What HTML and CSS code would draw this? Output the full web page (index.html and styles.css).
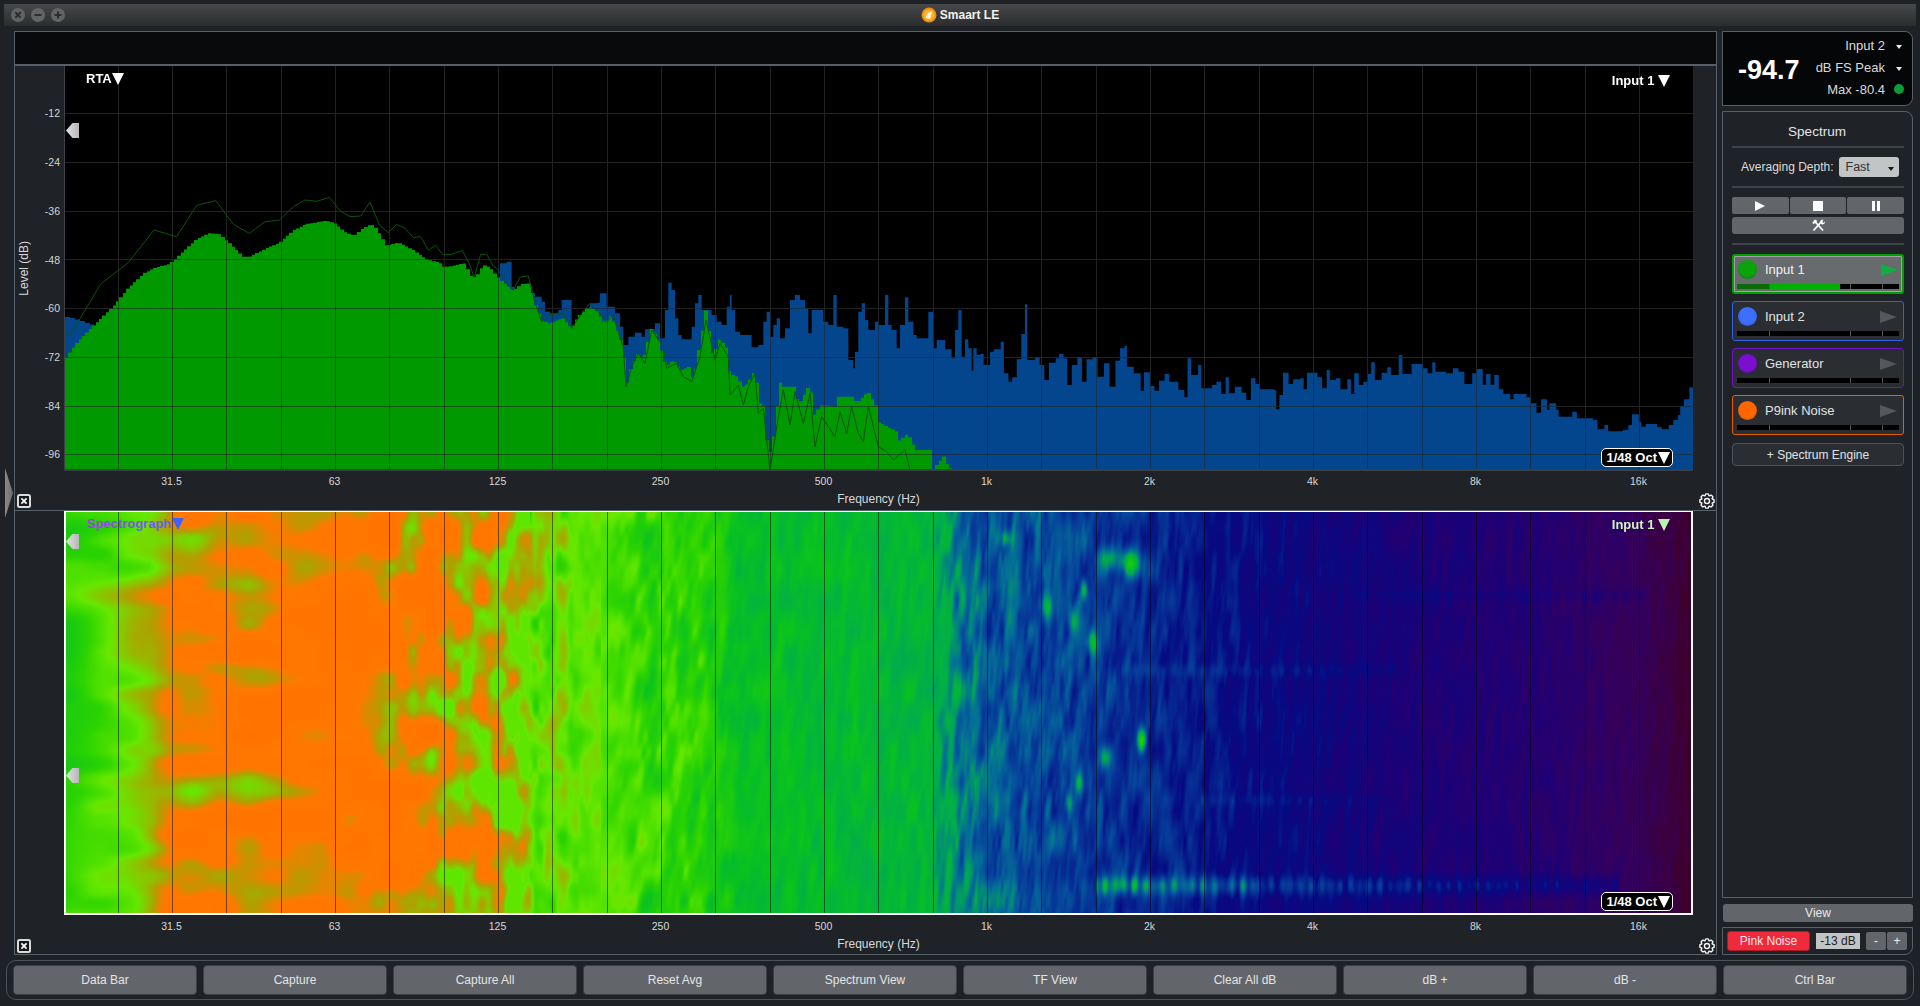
FILE: index.html
```html
<!DOCTYPE html>
<html lang="en">
<head>
<meta charset="utf-8">
<title>Smaart LE</title>
<link rel="stylesheet" href="styles.css">
</head>
<body>
<div class="app">
  <header class="titlebar">
    <div class="lights">
      <svg class="light" viewBox="0 0 14 14"><circle cx="7" cy="7" r="7" fill="#626466"/><path d="M4.3 4.3l5.4 5.4M9.7 4.3L4.3 9.7" stroke="#2c2e30" stroke-width="2"/></svg>
      <svg class="light" viewBox="0 0 14 14"><circle cx="7" cy="7" r="7" fill="#626466"/><path d="M3.5 7h7" stroke="#2c2e30" stroke-width="2"/></svg>
      <svg class="light" viewBox="0 0 14 14"><circle cx="7" cy="7" r="7" fill="#626466"/><path d="M3.5 7h7M7 3.5v7" stroke="#2c2e30" stroke-width="2"/></svg>
    </div>
    <div class="apptitle">
      <svg class="appicon" viewBox="0 0 16 16"><circle cx="8" cy="8" r="7.5" fill="#ef8f14"/><circle cx="8" cy="8" r="5.6" fill="#f7b22e"/><path d="M4.5 10.5C6 6 9 4.5 11.5 4.5C10 7 10.5 9 9 11.5C7.8 12.2 6 11.8 4.5 10.5z" fill="#fff3cf"/></svg>
      <span>Smaart LE</span>
    </div>
    <div></div>
  </header>

  <div class="main">
    <section class="scopes">
      <div class="strip"></div>

      <div class="scope">
        <div class="yaxis">
          <div class="ytitle"><span>Level (dB)</span></div>
          <div class="ylabels">
            <span>-12</span><span>-24</span><span>-36</span><span>-48</span><span>-60</span><span>-72</span><span>-84</span><span>-96</span>
          </div>
        </div>
        <div class="plot plot-rta">
          <canvas id="rta" class="plotcanvas" width="1628" height="403"></canvas>
          <div class="tag tag-left tag-white">RTA<i class="tri tri-white"></i></div>
          <div class="tag tag-right tag-white">Input 1 <i class="tri tri-white"></i></div>
          <div class="handle handle-a"></div>
          <div class="badge">1/48 Oct<i class="tri tri-white"></i></div>
        </div>
        <div></div>
        <div></div>
        <div class="ticks"><span>31.5</span><span>63</span><span>125</span><span>250</span><span>500</span><span>1k</span><span>2k</span><span>4k</span><span>8k</span><span>16k</span></div>
        <div></div>
        <div class="foot-left"><svg class="closebox" viewBox="0 0 14 14"><rect x="1" y="1" width="12" height="12" rx="1.5" fill="#15181a" stroke="#dadada" stroke-width="2"/><path d="M4.4 4.4l5.2 5.2M9.6 4.4L4.4 9.6" stroke="#fff" stroke-width="1.8"/></svg></div>
        <div class="foot-title">Frequency (Hz)</div>
        <div class="foot-right"><svg class="gear" viewBox="-8 -8 16 16"><polygon points="-2.1,-5.1 -1.25,-7.1 1.25,-7.1 2.1,-5.1 4.14,-5.9 5.9,-4.14 5.09,-2.12 7.1,-1.25 7.1,1.25 5.1,2.1 5.9,4.14 4.14,5.9 2.1,5.1 1.25,7.1 -1.25,7.1 -2.1,5.1 -4.14,5.9 -5.9,4.14 -5.1,2.1 -7.1,1.25 -7.1,-1.25 -5.1,-2.1 -5.9,-4.14 -4.14,-5.9" fill="none" stroke="#f4f4f4" stroke-width="1.4" stroke-linejoin="round"/><circle r="2.5" fill="none" stroke="#f4f4f4" stroke-width="1.4"/></svg></div>
      </div>

      <div class="divider"></div>

      <div class="scope scope-low">
        <div class="yaxis"></div>
        <div class="plot plot-spec">
          <canvas id="spec" class="plotcanvas" width="1625" height="401"></canvas>
          <div class="tag tag-left tag-spec"><span class="spectext">Spectrograph</span><i class="tri tri-blue"></i></div>
          <div class="tag tag-right tag-green">Input 1 <i class="tri tri-green"></i></div>
          <div class="handle handle-b"></div>
          <div class="handle handle-c"></div>
          <div class="badge badge-low">1/48 Oct<i class="tri tri-white"></i></div>
        </div>
        <div></div>
        <div></div>
        <div class="ticks ticks-low"><span>31.5</span><span>63</span><span>125</span><span>250</span><span>500</span><span>1k</span><span>2k</span><span>4k</span><span>8k</span><span>16k</span></div>
        <div></div>
        <div class="foot-left"><svg class="closebox" viewBox="0 0 14 14"><rect x="1" y="1" width="12" height="12" rx="1.5" fill="#15181a" stroke="#dadada" stroke-width="2"/><path d="M4.4 4.4l5.2 5.2M9.6 4.4L4.4 9.6" stroke="#fff" stroke-width="1.8"/></svg></div>
        <div class="foot-title">Frequency (Hz)</div>
        <div class="foot-right"><svg class="gear" viewBox="-8 -8 16 16"><polygon points="-2.1,-5.1 -1.25,-7.1 1.25,-7.1 2.1,-5.1 4.14,-5.9 5.9,-4.14 5.09,-2.12 7.1,-1.25 7.1,1.25 5.1,2.1 5.9,4.14 4.14,5.9 2.1,5.1 1.25,7.1 -1.25,7.1 -2.1,5.1 -4.14,5.9 -5.9,4.14 -5.1,2.1 -7.1,1.25 -7.1,-1.25 -5.1,-2.1 -5.9,-4.14 -4.14,-5.9" fill="none" stroke="#f4f4f4" stroke-width="1.4" stroke-linejoin="round"/><circle r="2.5" fill="none" stroke="#f4f4f4" stroke-width="1.4"/></svg></div>
      </div>
    </section>

    <aside class="side">
      <div class="meter">
        <div class="reading">-94.7</div>
        <div class="meterinfo">
          <span>Input 2</span><i class="caret"></i>
          <span>dB FS Peak</span><i class="caret"></i>
          <span>Max -80.4</span><i class="led"></i>
        </div>
      </div>

      <div class="engine">
        <div class="enginetitle">Spectrum</div>
        <div class="rule"></div>
        <div class="avgrow">
          <span>Averaging Depth:</span>
          <div class="select"><span>Fast</span><i class="caret caret-dark"></i></div>
        </div>
        <div class="rule"></div>
        <div class="transport">
          <div class="tbtn"><svg class="ticon" viewBox="0 0 10 10"><path d="M0 0l10 5L0 10z" fill="#fff"/></svg></div>
          <div class="tbtn"><svg class="ticon" viewBox="0 0 10 10"><rect width="10" height="10" fill="#fff"/></svg></div>
          <div class="tbtn"><svg class="ticon" viewBox="0 0 10 10"><path d="M1 0h3v10H1zM6 0h3v10H6z" fill="#fff"/></svg></div>
        </div>
        <div class="tools">
          <svg class="toolicon" viewBox="0 0 14 13"><path d="M3 1.5l9 10" stroke="#fff" stroke-width="1.8" fill="none"/><path d="M1.2 3.5L4.8 0.6l1.4 1.6L2.6 5.2z" fill="#fff"/><path d="M11.5 1.5L2.5 11.5" stroke="#fff" stroke-width="1.8" fill="none"/><path d="M9.4 4.4C8.6 2.4 10 .4 12.4.6L10.9 2.2l.6 1.4 1.5.2 1-1.6C14.4 5 12 6 10.6 5.3z" fill="#fff"/></svg>
        </div>
        <div class="rule rule-tools"></div>

        <div class="channel channel-green">
          <div class="chanrow">
            <i class="dot dot-green"></i><span class="channame">Input 1</span>
            <i class="play play-on"></i>
          </div>
          <div class="chanmeter"><b class="seg seg-a seg-dim"></b><b class="seg seg-b"><u class="segfill"></u></b><b class="seg seg-c"></b><b class="seg seg-d"></b></div>
        </div>
        <div class="channel channel-blue">
          <div class="chanrow">
            <i class="dot dot-blue"></i><span class="channame">Input 2</span>
            <i class="play"></i>
          </div>
          <div class="chanmeter"><b class="seg seg-a"></b><b class="seg seg-b"></b><b class="seg seg-c"></b><b class="seg seg-d"></b></div>
        </div>
        <div class="channel channel-purple">
          <div class="chanrow">
            <i class="dot dot-purple"></i><span class="channame">Generator</span>
            <i class="play"></i>
          </div>
          <div class="chanmeter"><b class="seg seg-a"></b><b class="seg seg-b"></b><b class="seg seg-c"></b><b class="seg seg-d"></b></div>
        </div>
        <div class="channel channel-orange">
          <div class="chanrow">
            <i class="dot dot-orange"></i><span class="channame">P9ink Noise</span>
            <i class="play"></i>
          </div>
          <div class="chanmeter"><b class="seg seg-a"></b><b class="seg seg-b"></b><b class="seg seg-c"></b><b class="seg seg-d"></b></div>
        </div>
        <div class="addengine">+ Spectrum Engine</div>
      </div>

      <div class="viewbtn">View</div>

      <div class="noise">
        <div class="pink">Pink Noise</div>
        <div class="dbbox">-13 dB</div>
        <div class="stepper"><span>-</span><span>+</span></div>
      </div>
    </aside>
  </div>

  <footer class="bottombar">
    <div class="cmd">Data Bar</div>
    <div class="cmd">Capture</div>
    <div class="cmd">Capture All</div>
    <div class="cmd">Reset Avg</div>
    <div class="cmd">Spectrum View</div>
    <div class="cmd">TF View</div>
    <div class="cmd">Clear All dB</div>
    <div class="cmd">dB +</div>
    <div class="cmd">dB -</div>
    <div class="cmd">Ctrl Bar</div>
  </footer>

  <div class="gripper"></div>
</div>
<script src="spectrum.js"></script>
</body>
</html>
```
FILE: styles.css
```css
* { box-sizing: border-box; }

html, body {
  margin: 0;
  height: 1006px;
  overflow: hidden;
  background: #14171a;
}

body {
  font-family: "Liberation Sans", Arial, sans-serif;
  font-size: 12px;
  color: #dcdcdc;
}

i, b, u { display: block; font-style: normal; text-decoration: none; }

.app {
  position: relative;
  height: 1006px;
  padding: 4px;
  display: flex;
  flex-direction: column;
  background: #1e2226;
}

/* title bar */
.titlebar {
  height: 22px;
  flex: none;
  display: grid;
  grid-template-columns: 1fr auto 1fr;
  align-items: center;
  background: linear-gradient(#464849, #2a2c2e);
}
.lights { display: flex; gap: 6px; padding-left: 7px; }
.light { width: 14px; height: 14px; display: block; }
.apptitle {
  display: flex;
  align-items: center;
  gap: 3px;
  font-weight: 700;
  font-size: 12px;
  color: #f2f2f2;
}
.appicon { width: 16px; height: 16px; display: block; }

/* main columns */
.main {
  flex: none;
  height: 923px;
  margin: 5px 3px 0 10px;
  display: grid;
  grid-template-columns: 1703px 191px;
  column-gap: 5px;
}

.scopes {
  border: 1px solid #566069;
  display: flex;
  flex-direction: column;
  background: #1f2327;
}
.strip {
  height: 34px;
  flex: none;
  background: #090a0b;
  border-bottom: 2px solid #566069;
}
.divider { height: 1px; flex: none; background: #566069; }

.scope {
  display: grid;
  grid-template-columns: 49px 1629px 1fr;
  grid-template-rows: 405px 20px 19px;
  flex: none;
}
.scope-low { grid-template-rows: 404px 21px 18px; }

.yaxis { display: flex; color: #d4d4d4; }
.ytitle {
  width: 18px;
  display: flex;
  align-items: center;
  justify-content: center;
}
.ytitle span {
  writing-mode: vertical-rl;
  transform: rotate(180deg);
  font-size: 12px;
  color: #d8d8d8;
}
.ylabels {
  flex: 1;
  display: flex;
  flex-direction: column;
  align-items: flex-end;
  padding: 23px 4px 0 0;
  font-size: 10.5px;
}
.ylabels span {
  flex: none;
  height: 48.72px;
  display: flex;
  align-items: center;
}

.plot { position: relative; background: #000; }
.plot-rta { border-left: 1px solid #3a4046; border-right: 1px solid #3a4046; border-bottom: 2px solid #3a4046; }
.plot-spec { border: 2px solid #fff; border-top-width: 1px; }
.plotcanvas { display: block; }

.ticks {
  display: grid;
  grid-template-columns: repeat(10, 163px);
  padding-left: 26px;
  align-items: center;
  font-size: 10.5px;
  color: #d8d8d8;
  text-align: center;
}
.foot-left { padding: 3px 0 0 2px; }
.foot-right { padding: 2px 0 0 6px; }
.foot-title { padding-top: 1px; text-align: center; line-height: 15px; font-size: 12px; color: #d8d8d8; }
.closebox { width: 14px; height: 14px; display: block; }
.gear { width: 16px; height: 16px; display: block; }

/* plot overlays */
.tag {
  position: absolute;
  display: flex;
  align-items: center;
  line-height: 15px;
  font-weight: 700;
  font-size: 13px;
}
.tag-left { left: 21px; top: 5px; }
.tag-right { right: 22px; top: 7px; white-space: pre; }
.plot-spec .tag-left { top: 4px; }
.plot-spec .tag-right { top: 5px; right: 21px; }
.tag-white { color: #fff; }
.tag-green { color: #c8f7b8; }
.spectext {
  background: linear-gradient(90deg, #b030ff, #5064ff);
  -webkit-background-clip: text;
  background-clip: text;
  color: transparent;
}
.tri {
  width: 0;
  height: 0;
  border-left: 6px solid transparent;
  border-right: 6px solid transparent;
  border-top: 12px solid #fff;
}
.tri-white { border-top-color: #fff; }
.tri-blue { border-top-color: #3f60ff; }
.tri-green { border-top-color: #b8f5b0; }

.handle {
  position: absolute;
  left: 1px;
  width: 13px;
  height: 15px;
  background: linear-gradient(90deg, #e2e2e2, #b6b6b6);
  clip-path: polygon(0 50%, 50% 0, 100% 0, 100% 100%, 50% 100%);
}
.handle-a { top: 57px; }
.handle-b { top: 22px; left: 0; }
.handle-c { top: 256px; left: 0; }

.badge {
  position: absolute;
  right: 19px;
  bottom: 2px;
  height: 19px;
  padding: 0 2px 0 4px;
  display: flex;
  align-items: center;
  gap: 1px;
  background: #000;
  border: 1.5px solid #fff;
  border-radius: 5px;
  font-weight: 700;
  font-size: 13px;
  color: #fff;
}
.badge-low { right: 18px; bottom: 2px; }

/* side column */
.side { display: flex; flex-direction: column; }

.meter {
  height: 75px;
  flex: none;
  display: flex;
  align-items: center;
  justify-content: space-between;
  padding: 0 8px 0 15px;
  background: #050607;
  border: 1px solid #566069;
  border-radius: 0 8px 8px 0;
}
.reading { font-weight: 700; font-size: 27px; color: #fff; padding-top: 3px; }
.meterinfo {
  display: grid;
  grid-template-columns: auto 10px;
  column-gap: 9px;
  row-gap: 7px;
  align-items: center;
  justify-items: end;
  margin-top: -3px;
  font-size: 13px;
  line-height: 15px;
  color: #dadada;
}
.caret {
  width: 0;
  height: 0;
  border-left: 3px solid transparent;
  border-right: 3px solid transparent;
  border-top: 4px solid #e8e8e8;
  margin: 3px 2px 0 0;
}
.caret-dark { border-top-color: #1a1a1a; margin: 4px 0 0 0; }
.led { width: 10px; height: 10px; border-radius: 50%; background: #0b9c3a; }

.engine {
  flex: 1;
  min-height: 0;
  margin-top: 5px;
  padding: 8px 8px 0 9px;
  background: #1f2327;
  border: 1px solid #566069;
  border-radius: 0 8px 0 0;
}
.enginetitle { height: 26px; padding-right: 2px; font-size: 13.5px; line-height: 23px; text-align: center; color: #e4e4e4; }
.rule { height: 2px; background: #3d444a; }
.rule-tools { margin-top: 9px; }
.avgrow {
  height: 38px;
  display: flex;
  align-items: center;
  gap: 5px;
  padding-left: 9px;
  font-size: 12px;
  color: #dcdcdc;
}
.select {
  width: 60px;
  height: 20px;
  padding: 0 5px 0 7px;
  display: flex;
  align-items: center;
  justify-content: space-between;
  background: #c1c5c5;
  border-radius: 3px;
  font-size: 12.5px;
  color: #333;
}
.transport {
  display: grid;
  grid-template-columns: repeat(3, 1fr);
  gap: 1px;
  margin-top: 9px;
}
.tbtn {
  height: 17px;
  display: flex;
  align-items: center;
  justify-content: center;
  background: #62666b;
  border-radius: 2px;
}
.ticon { width: 10px; height: 10px; display: block; }
.tools {
  height: 17px;
  margin-top: 3px;
  display: flex;
  align-items: center;
  justify-content: center;
  background: #62666b;
  border-radius: 3px;
}
.toolicon { width: 14px; height: 13px; display: block; }

.channel {
  height: 40px;
  margin-top: 7px;
  padding: 3px 4px 0;
  background: #2a2e33;
  border: 1px solid;
  border-radius: 3px;
}
.rule-tools + .channel { margin-top: 9px; }
.channel-green {
  padding: 2px 3px 0;
  border: 2px solid #00a000;
  background: #676b6e;
  box-shadow: inset 0 0 0 1px #a0a4a4;
}
.channel-blue { border-color: #2d60e6; }
.channel-purple { border-color: #6d12c4; }
.channel-orange { border-color: #e65f00; }
.chanrow {
  height: 23px;
  display: flex;
  align-items: center;
  gap: 8px;
  padding-left: 1px;
}
.dot { width: 19px; height: 19px; flex: none; border-radius: 50%; }
.dot-green { background: radial-gradient(circle at 50% 45%, #0ca20c 55%, #055a05 100%); }
.dot-blue { background: radial-gradient(circle at 50% 45%, #3c6eff 55%, #26449e 100%); }
.dot-purple { background: radial-gradient(circle at 50% 45%, #7a0fd2 55%, #450a7c 100%); }
.dot-orange { background: radial-gradient(circle at 50% 45%, #ff6600 55%, #a94608 100%); }
.channame { flex: 1; font-size: 13px; color: #e2e2e2; }
.channel-green .channame { color: #f0f0f0; }
.play {
  width: 0;
  height: 0;
  margin-right: 2px;
  border-top: 6px solid transparent;
  border-bottom: 6px solid transparent;
  border-left: 17px solid #54585c;
}
.play-on { border-left-color: #12ae42; margin-right: 1px; }
.chanmeter {
  display: flex;
  gap: 1px;
  height: 5px;
  margin-top: 3px;
  background: #555;
}
.seg { height: 5px; background: #000; }
.seg-a { width: 32px; }
.seg-b { width: 80px; }
.seg-c { width: 31px; }
.seg-d { flex: 1; }
.seg-dim { background: #0a6a0a; }
.segfill { width: 70px; height: 5px; background: #00b000; }

.addengine {
  height: 23px;
  margin-top: 8px;
  display: flex;
  align-items: center;
  justify-content: center;
  background: #2a2e33;
  border: 1px solid #4c545b;
  border-radius: 4px;
  font-size: 12px;
  color: #e0e0e0;
}

.viewbtn {
  height: 18px;
  flex: none;
  margin-top: 6px;
  margin-left: 1px;
  display: flex;
  align-items: center;
  justify-content: center;
  background: #62666b;
  border-radius: 3px;
  font-size: 12px;
  color: #e8e8e8;
}

.noise {
  height: 28px;
  flex: none;
  margin-top: 5px;
  padding: 0 4px;
  display: flex;
  align-items: center;
  background: #1f2327;
  border: 1px solid #566069;
  border-radius: 0 0 8px 0;
}
.pink {
  width: 83px;
  height: 20px;
  display: flex;
  align-items: center;
  justify-content: center;
  background: #ee2a3c;
  border: 1px solid #a81c2a;
  border-radius: 3px;
  font-size: 12px;
  color: #fbe8ea;
}
.dbbox {
  width: 44px;
  height: 16px;
  margin-left: 6px;
  display: flex;
  align-items: center;
  justify-content: center;
  background: #c1c5c5;
  font-size: 12px;
  color: #222;
}
.stepper {
  margin-left: 6px;
  display: grid;
  grid-template-columns: 20px 20px;
  gap: 1px;
}
.stepper span {
  height: 18px;
  display: flex;
  align-items: center;
  justify-content: center;
  background: #62666b;
  border-radius: 2px;
  font-size: 12px;
  color: #eee;
}

/* bottom bar */
.bottombar {
  height: 40px;
  flex: none;
  margin: 6px 2px 0 2px;
  padding: 4px 6px;
  display: flex;
  gap: 6px;
  border: 1px solid #4a5259;
  border-radius: 10px;
}
.cmd {
  flex: 1;
  display: flex;
  align-items: center;
  justify-content: center;
  background: #62666b;
  border: 1px solid #3c4045;
  border-radius: 4px;
  font-size: 12px;
  color: #e4e4e4;
}

.gripper {
  position: absolute;
  left: 5px;
  top: 468px;
  width: 8px;
  height: 50px;
  background: linear-gradient(90deg, #8a8a8a, #6c6c6c);
  clip-path: polygon(0 0, 100% 50%, 0 100%);
}
```
FILE: spectrum.js
```js
(function () {
  // ---------- RTA ----------
  var OX = 65, OY = 66, W = 1628, H = 403, BOTTOM = 469;

  function conv(list, ox, sx, oy, sy) {
    var out = [];
    for (var i = 0; i < list.length; i += 2) {
      out.push([ox + list[i] / sx, oy + list[i + 1] / sy]);
    }
    return out;
  }

  var greenTop = conv([18,505,50,460,100,408,160,350,205,295,255,248,290,232,330,222,370,185,410,148,450,129,480,133,510,160,550,200,570,200,620,175,660,158,700,122,740,102,800,92,825,100,860,130,885,136,910,115,935,102,950,115,980,168,1015,157,1060,180,1100,208,1140,218,1155,232,1215,220,1235,260,1250,260,1270,225,1290,232,1320,268], 60, 3, 190, 3)
    .concat(conv([40,92,65,72,90,70,105,128,125,180,150,190,175,180,190,175,215,205,235,170,265,140,290,150,315,190,335,165,350,205,370,260,375,315,380,380,395,320,415,280,430,300,455,205,475,240,500,320,520,300,545,330,570,320,580,365,600,255,618,150,640,290,660,235,680,265,690,340,710,350,730,380,745,370,765,330,780,430,795,440,805,600,820,545,840,365,850,380,890,380,895,440,930,372,945,470,960,435,1010,440,1015,410,1060,410,1070,430,1105,395,1130,440,1135,485,1190,515,1195,545,1225,520,1235,545,1250,570,1295,570,1300,630,1315,610,1335,585,1345,625,1360,625,1370,640], 500, 3, 260, 3));

  var greenLine = conv([18,438,35,428,122,282,205,218,282,120,350,140,410,46,468,32,520,103,568,130,615,95,658,90,700,50,735,30,770,34,808,22,840,62,870,80,902,78,930,36,958,105,985,128,1010,103,1035,115,1060,142,1082,140,1105,180,1127,166,1148,194,1170,194,1207,182,1225,215,1243,262,1262,193,1280,193,1300,228,1312,237,1340,280,1360,300,1380,262], 60, 3, 190, 3)
    .concat(conv([65,50,85,48,105,128,125,185,150,165,175,160,195,165,215,205,245,160,270,130,290,150,320,185,340,165,350,200,370,260,378,380,395,320,415,280,435,310,455,210,490,260,500,325,530,310,550,350,575,365,600,290,618,180,645,300,660,250,685,290,690,405,715,375,730,435,745,380,765,340,775,460,790,445,810,630,835,470,850,390,870,495,885,395,910,490,930,400,945,560,965,470,985,500,1005,530,1020,455,1040,520,1055,440,1075,520,1090,545,1105,440,1135,560,1160,575,1180,600,1215,570,1230,630], 500, 3, 260, 3));

  var blueTop = [[65,317],[70,318],[75,319.5],[80,321],[85,323],[90,324.5],[94,326],[95,420]]
    .concat(conv([0,10,20,5,35,80,45,90,60,100,105,110,125,125,135,155,150,160,175,150,185,120,205,120,215,200,235,170,270,130,290,128,300,100,320,140,345,160,360,200,370,255,385,230,405,218,425,230,435,208,465,190,480,235,495,150,505,68,515,90,525,175,535,225,545,238,575,200,585,130,595,105,605,150,635,165,650,185,665,195,680,140,690,105,695,150,705,215,720,225,745,225,755,262,775,255,790,185,800,155,810,230,820,195,830,175,840,235,855,205,870,120,885,105,900,120,915,145,925,220,935,150,955,150,970,185,985,195,1000,105,1010,200,1030,205,1045,300,1060,325,1065,275,1075,155,1085,130,1095,180,1105,210,1125,185,1135,195,1155,105,1165,195,1175,210,1190,265,1200,195,1215,112,1225,185,1240,225,1250,235,1270,235,1285,155,1300,265,1310,240,1335,268,1355,295,1365,210,1375,150,1385,290,1395,238,1405,265,1415,332,1420,265,1430,285,1440,285], 500, 3, 260, 3))
    .concat(conv([0,252,8,285,22,245,30,238,45,215,52,310,62,335,70,322,80,268,90,192,98,103,103,270,120,262,130,285,140,330,150,278,165,265,172,252,182,265,190,345,200,285,212,262,222,335,232,268,245,262,256,320,270,280,282,350,295,272,305,235,315,228,320,290,335,310,350,362,357,307,370,348,380,362,390,332,402,312,412,335,432,360,445,382,452,265,460,315,475,285,482,355,505,345,515,335,525,372,535,322,542,370,555,350,570,368,580,390,590,325,600,342,610,358,640,360,645,418,652,375,660,308,672,342,682,328,698,325,705,358,712,308,735,322,745,355,755,300,762,330,775,325,785,358,800,328,808,372,815,310,825,345,835,335,845,312,852,277,860,330,875,308,887,292,895,315,912,255,920,312,940,282,965,295,975,310,985,277,992,305,1015,310,1030,295,1042,305,1055,342,1072,310,1082,297,1095,345,1102,312,1112,345,1120,315,1130,358,1140,372,1155,388,1162,372,1190,382,1200,400,1212,428,1222,388,1235,420,1240,400,1255,420,1260,440,1290,425,1300,445,1320,445,1335,450,1345,478,1360,465,1368,484,1400,480,1412,465,1420,433,1435,455,1440,470,1450,462,1475,472,1485,478,1500,465,1510,450,1520,435,1525,408,1533,388,1545,352,1552,352], 980, 2.178, 270, 3));

  function interp(points, x) {
    if (x <= points[0][0]) return points[0][1];
    for (var i = 1; i < points.length; i++) {
      if (x <= points[i][0]) {
        var a = points[i - 1], b = points[i];
        return a[1] + (b[1] - a[1]) * (x - a[0]) / (b[0] - a[0] || 1);
      }
    }
    return BOTTOM + 5;
  }

  var vx = [];
  for (var n = 1; 117.7 + (n - 1) * 54.33 < 1692; n++) vx.push(Math.round(117.7 + (n - 1) * 54.33));
  var hy = [];
  for (var m = 0; m < 8; m++) hy.push(Math.round(113.3 + m * 48.72));

  var rta = document.getElementById("rta").getContext("2d");

  function grid(color) {
    rta.fillStyle = color;
    vx.forEach(function (x) { rta.fillRect(x - OX, 0, 1, H); });
    hy.forEach(function (y) { rta.fillRect(0, y - OY, W, 1); });
  }

  rta.fillStyle = "#000";
  rta.fillRect(0, 0, W, H);
  grid("#232323");

  // blue fill, as steps
  rta.fillStyle = "#03468e";
  rta.beginPath();
  rta.moveTo(blueTop[0][0] - OX, H);
  blueTop.forEach(function (p, i) {
    var next = blueTop[i + 1] ? blueTop[i + 1][0] : 1693;
    rta.lineTo(p[0] - OX, p[1] - OY);
    rta.lineTo(next - OX, p[1] - OY);
  });
  rta.lineTo(1693 - OX, H);
  rta.closePath();
  rta.fill();

  // green fill, sampled into 1/48 octave bars
  rta.fillStyle = "#009900";
  rta.beginPath();
  rta.moveTo(0, H);
  for (var bx = 65; bx < 960; bx += 3.4) {
    var by = interp(greenTop, bx + 1.7);
    rta.lineTo(Math.round(bx) - OX, by - OY);
    rta.lineTo(Math.round(bx + 3.4) - OX, by - OY);
  }
  rta.lineTo(960 - OX, H);
  rta.closePath();
  rta.fill();

  // darkened grid over the filled parts
  grid("rgba(34,34,34,.55)");

  // peak hold trace
  rta.strokeStyle = "#0c520c";
  rta.lineWidth = 1;
  rta.beginPath();
  greenLine.forEach(function (p, i) {
    if (i === 0) rta.moveTo(p[0] - OX, p[1] - OY);
    else rta.lineTo(p[0] - OX, p[1] - OY);
  });
  rta.stroke();

  // ---------- spectrograph ----------
  var spec = document.getElementById("spec").getContext("2d");
  var SW = 1625, SH = 401, SOX = 66, SOY = 512;
  var image = spec.createImageData(SW, SH);

  function table(stops, x) {
    if (x <= stops[0][0]) return stops[0][1];
    for (var i = 1; i < stops.length; i++) {
      if (x <= stops[i][0]) {
        var a = stops[i - 1], b = stops[i];
        return a[1] + (b[1] - a[1]) * (x - a[0]) / (b[0] - a[0]);
      }
    }
    return stops[stops.length - 1][1];
  }

  var baseStops = [[66,.70],[110,.76],[150,.84],[172,.93],[250,.95],[330,1.0],[400,.98],[430,.94],[480,.88],[515,.82],[535,.78],[600,.765],[650,.70],[700,.68],[740,.60],[800,.58],[925,.56],[945,.50],[985,.40],[1050,.375],[1150,.315],[1250,.255],[1400,.195],[1550,.155],[1640,.09],[1692,.02]];
  var ampStops = [[66,.06],[170,.11],[250,.13],[340,.08],[430,.15],[520,.12],[600,.03],[650,.07],[710,.06],[750,.03],[925,.03],[960,.07],[1150,.045],[1400,.03],[1692,.02]];
  var widthStops = [[66,70],[300,55],[400,22],[520,13],[700,9],[950,6],[1692,5]];

  var colors = [
    [0,64,0,36],[.1,52,0,92],[.18,30,0,118],[.26,6,10,130],[.36,6,62,154],[.44,4,110,150],
    [.52,0,170,80],[.6,8,192,34],[.7,44,212,0],[.78,102,232,0],[.88,176,160,0],[.95,255,120,0],[1.2,255,112,0]
  ];

  function color(t) {
    if (t <= 0) return colors[0];
    for (var i = 1; i < colors.length; i++) {
      if (t <= colors[i][0]) {
        var a = colors[i - 1], b = colors[i], k = (t - a[0]) / (b[0] - a[0]);
        return [0, a[1] + (b[1] - a[1]) * k, a[2] + (b[2] - a[2]) * k, a[3] + (b[3] - a[3]) * k];
      }
    }
    return colors[colors.length - 1];
  }

  function hash(i, j) {
    var h = Math.sin(i * 127.1 + j * 311.7) * 43758.5453;
    return (h - Math.floor(h)) * 2 - 1;
  }
  function noise(x, y) {
    var i = Math.floor(x), j = Math.floor(y), fx = x - i, fy = y - j;
    var u = fx * fx * (3 - 2 * fx), v = fy * fy * (3 - 2 * fy);
    var a = hash(i, j), b = hash(i + 1, j), c = hash(i, j + 1), d = hash(i + 1, j + 1);
    return a + (b - a) * u + (c - a) * v + (a - b - c + d) * u * v;
  }

  var blobs = [
    [1110,558,12,12,.18],[1131,563,10,14,.3],[1005,538,6,8,.17],[1084,590,3,10,.2],[1047,608,5,14,.17],
    [1073,620,5,16,.17],[1092,642,5,12,.22],[1141,740,4,12,.38],[1105,757,6,12,.22],[1079,783,4,10,.15],[1068,803,4,10,.13]
  ];
  var stripes = [
    [885,10,1095,1150,.26,1],[885,10,1150,1260,.2,1],[885,10,1260,1620,.14,1],
    [595,6,1350,1650,.05,1],[670,7,1120,1400,.055,1],[800,6,1200,1390,.04,1]
  ];

  var uMap = new Float64Array(SW);
  var base = new Float64Array(SW), amp = new Float64Array(SW);
  var acc = 0;
  for (var px = 0; px < SW; px++) {
    var fx = px + SOX;
    acc += 1 / table(widthStops, fx);
    uMap[px] = acc;
    base[px] = table(baseStops, fx);
    amp[px] = table(ampStops, fx);
  }

  for (var y = 0; y < SH; y++) {
    var fy = y + SOY;
    for (var xp = 0; xp < SW; xp++) {
      var fullx = xp + SOX;
      var slant = fullx > 600 ? (y * 0.012) : 0;
      var uu = uMap[xp] + slant;
      var vscale = fullx > 600 ? 30 : 28;
      var t = base[xp] + amp[xp] * (1.15 * noise(uu, y / vscale + 3.1) + 0.5 * noise(uu * 2.1 + 7, y / (vscale / 2) + 9));
      if (fullx < 530 && fullx > 150 && t < 0.77) t = 0.77;

      for (var k = 0; k < stripes.length; k++) {
        var s = stripes[k];
        if (fullx > s[2] && fullx < s[3]) {
          var dy = (fy - s[0]) / s[1];
          if (dy > -2.5 && dy < 2.5) {
            var ripple = 0.65 + 0.35 * Math.sin(fullx * 0.55) * Math.sin(fullx * 0.09);
            t += s[4] * ripple * Math.exp(-dy * dy);
          }
        }
      }
      for (var b = 0; b < blobs.length; b++) {
        var bl = blobs[b];
        var ddx = (fullx - bl[0]) / bl[2], ddy = (fy - bl[1]) / bl[3];
        if (ddx * ddx + ddy * ddy < 9) t += bl[4] * Math.exp(-(ddx * ddx + ddy * ddy));
      }

      var c = color(t);
      var o = (y * SW + xp) * 4;
      image.data[o] = c[1];
      image.data[o + 1] = c[2];
      image.data[o + 2] = c[3];
      image.data[o + 3] = 255;
    }
  }
  spec.putImageData(image, 0, 0);

  spec.fillStyle = "rgba(0,0,0,.5)";
  vx.forEach(function (x) { spec.fillRect(x - SOX, 0, 1, SH); });
})();
```
